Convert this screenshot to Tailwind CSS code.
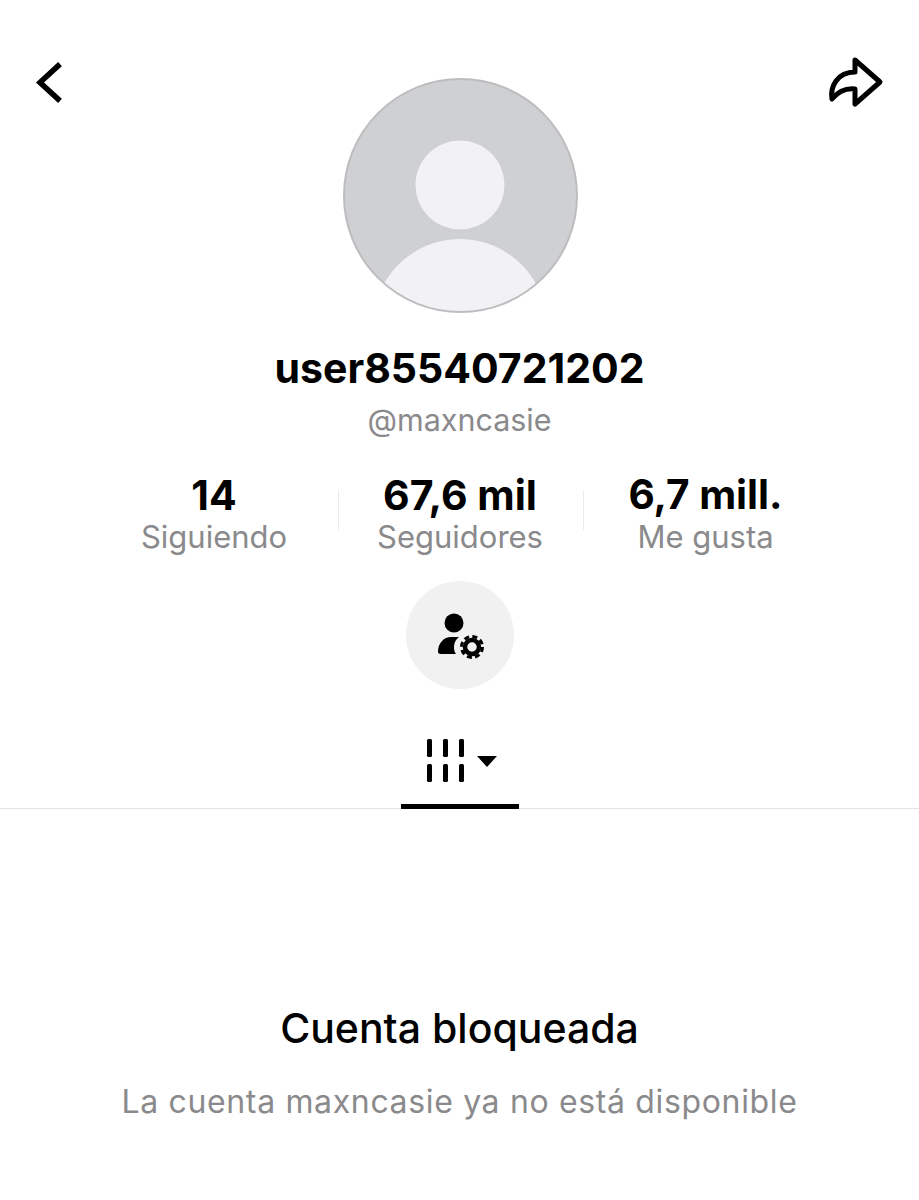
<!DOCTYPE html>
<html lang="es">
<head>
    <meta charset="UTF-8">
    <meta name="viewport" content="width=device-width, initial-scale=1.0">
    <title>Cuenta bloqueada</title>
    <script src="https://cdn.jsdelivr.net/npm/@tailwindcss/browser@4"></script>
</head>
<body class="bg-white min-h-screen font-['Inter',sans-serif] text-black">
    <!-- Top row: back, avatar, share -->
    <div class="flex items-start justify-between pl-[35px] pr-[34px] pt-[57px]">
        <div class="w-[58px] mt-[3px]">
            <svg width="30" height="48" viewBox="0 0 30 48" fill="none">
                <path d="M23 6 L5 22.5 L23 39" stroke="#000" stroke-width="5.5" stroke-linecap="square" stroke-linejoin="miter"/>
            </svg>
        </div>
        <svg class="mt-[21px]" width="235" height="235" viewBox="0 0 235 235">
            <defs><clipPath id="avatar-clip"><circle cx="117.5" cy="117.5" r="116.5"/></clipPath></defs>
            <circle cx="117.5" cy="117.5" r="116.5" fill="#cfd0d2"/>
            <circle cx="117" cy="107" r="44.5" fill="#f2f2f4"/>
            <circle cx="117" cy="248" r="87" fill="#f2f2f4" clip-path="url(#avatar-clip)"/>
            <circle cx="117.5" cy="117.5" r="116.5" fill="none" stroke="#bdbdbf" stroke-width="2"/>
        </svg>
        <svg width="58" height="52" viewBox="0 0 58 52" fill="none">
            <path d="M28 3 L53 25 L28 47 L28 32 C18 31 10 36 5 42 C3 30 10 15 28 15 Z" stroke="#000" stroke-width="5" stroke-linejoin="round"/>
        </svg>
    </div>

    <h1 class="mt-[30px] text-center text-[41px] leading-[50px] font-bold">user85540721202</h1>
    <p class="mt-[9px] text-center text-[30.5px] leading-[36px] text-[#8a8a8c]">@maxncasie</p>

    <!-- Stats -->
    <div class="mt-[33px] ml-[92px] mr-[89px] grid grid-cols-3">
        <div class="flex flex-col items-center pr-[2px]">
            <span class="text-[41px] leading-[48px] font-bold">14</span>
            <span class="text-[31px] leading-[36px] text-[#8a8a8c]">Siguiendo</span>
        </div>
        <div class="flex flex-col items-center relative pr-[2px]">
            <span class="absolute left-0 top-[19px] h-[40px] w-px bg-[#ececec]"></span>
            <span class="absolute right-0 top-[19px] h-[40px] w-px bg-[#ececec]"></span>
            <span class="text-[41px] leading-[48px] font-bold">67,6 mil</span>
            <span class="text-[31px] leading-[36px] text-[#8a8a8c]">Seguidores</span>
        </div>
        <div class="flex flex-col items-center pr-[3px]">
            <span class="text-[40.5px] leading-[48px] font-bold">6,7 mill.</span>
            <span class="text-[31px] leading-[36px] text-[#8a8a8c]">Me gusta</span>
        </div>
    </div>

    <!-- Account settings button -->
    <div class="mt-[26px] mx-auto w-[108px] h-[108px] rounded-full bg-[#f1f1f2] flex items-center justify-center">
        <svg width="50" height="48" viewBox="0 0 50 48" fill="#000">
            <circle cx="19" cy="12" r="9.5"/>
            <path d="M3 41 C3 32 9 26 16 26 L24 26 C20 29 19 33 19 37 C19 39 20 42 21 43 L6 43 C4 43 3 42 3 41 Z"/>
            <circle cx="37" cy="36" r="7" fill="none" stroke="#000" stroke-width="4.5"/>
            <circle cx="37" cy="36" r="10.5" fill="none" stroke="#000" stroke-width="3" stroke-dasharray="5 3.25"/>
        </svg>
    </div>

    <!-- Tab bar -->
    <div class="mt-[40px] border-b border-[#e3e3e3] h-[80px] flex justify-center">
        <div class="w-[118px] h-[80px] border-b-[5px] border-black flex items-start justify-center pt-[10px] pl-[4px]">
            <svg width="74" height="44" viewBox="0 0 74 44" fill="#000">
                <rect x="2" y="0" width="5" height="18" rx="1.5"/>
                <rect x="2" y="25" width="5" height="18" rx="1.5"/>
                <rect x="18" y="0" width="5" height="18" rx="1.5"/>
                <rect x="18" y="25" width="5" height="18" rx="1.5"/>
                <rect x="34" y="0" width="5" height="18" rx="1.5"/>
                <rect x="34" y="25" width="5" height="18" rx="1.5"/>
                <path d="M52 17 L72 17 L62 28 Z"/>
            </svg>
        </div>
    </div>

    <!-- Banned message -->
    <div class="mt-[194px] text-center">
        <h2 class="text-[41px] leading-[50px] font-medium">Cuenta bloqueada</h2>
        <p class="mt-[29px] text-[32px] leading-[40px] tracking-[0.65px] text-[#8a8a8c]">La cuenta maxncasie ya no está disponible</p>
    </div>
</body>
</html>
